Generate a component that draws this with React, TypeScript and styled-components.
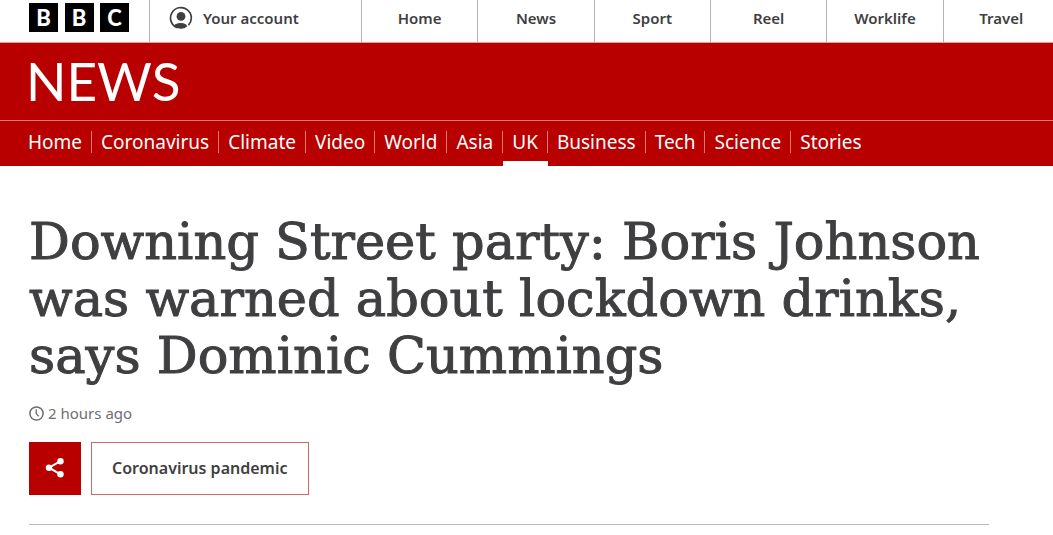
import React from "react";
import styled, { createGlobalStyle } from "styled-components";

const sans = `"Noto Sans", "Open Sans", sans-serif`;

const Global = createGlobalStyle`
  * { box-sizing: border-box; }
  body { margin: 0; background: #fff; color: #3f3f42; font-family: ${sans}; }
  a { color: inherit; text-decoration: none; }
`;

const TopBar = styled.header`
  display: flex;
  height: 43px;
  padding-left: 29px;
  overflow: hidden;
  border-bottom: 1px solid #d9a3a0;
`;

const Blocks = styled.a`
  display: flex;
  justify-content: space-between;
  flex: none;
  width: 100px;
  margin-right: 20px;
  padding-top: 3px;
`;

const Block = styled.span`
  width: 29px;
  height: 29px;
  background: #000;
  color: #fff;
  font: 900 22px/29px Lato, sans-serif;
  text-align: center;
`;

const TopLink = styled.a<{ $account?: boolean }>`
  display: flex;
  flex: ${(p) => (p.$account ? "0 0 212px" : "1 1 0")};
  align-items: center;
  justify-content: ${(p) => (p.$account ? "flex-start" : "center")};
  gap: 10px;
  padding: 0 0 6px ${(p) => (p.$account ? 19 : 0)}px;
  border-left: 1px solid #b5b5b5;
  font-size: 15px;
  font-weight: 600;
  line-height: 20px;
`;

const TopNav = styled.nav`
  display: flex;
  flex: 1 0 698px;
`;

const Masthead = styled.div`
  background: #b80000;
  color: #fff;
`;

const Brand = styled.a`
  display: block;
  height: 77px;
  padding: 6px 26px 0;
  font: 400 53px/64px Lato, sans-serif;
`;

const Sections = styled.nav`
  display: flex;
  height: 46px;
  padding-left: 19px;
  border-top: 1px solid #e2796f;
`;

const Section = styled.a<{ $active?: boolean }>`
  height: 45px;
  padding-top: 10px;
  border-bottom: ${(p) => (p.$active ? "5px solid #fff" : "0")};
  font-size: 19px;
  font-weight: 400;
  line-height: 22px;

  span {
    display: block;
    padding: 0 9px;
    border-right: 1px solid #e2796f;
  }
  &:last-child span { border-right: 0; }
`;

const Article = styled.main`
  margin: 0 64px 0 29px;
  padding: 47px 0 29px;
  border-bottom: 1px solid #b9b9bc;
`;

const Headline = styled.h1`
  margin: 0;
  font: 400 51px/57px "DejaVu Serif", serif;
  -webkit-text-stroke: 1px currentColor;
`;

const Time = styled.div`
  display: flex;
  align-items: center;
  gap: 4px;
  margin-top: 19px;
  color: #6e6e73;
  font-size: 15px;
  line-height: 20px;
`;

const Actions = styled.div`
  display: flex;
  gap: 10px;
  margin-top: 19px;
`;

const Share = styled.button`
  display: flex;
  align-items: center;
  justify-content: center;
  width: 52px;
  height: 53px;
  padding: 0 0 2px;
  border: 0;
  background: #b80000;
`;

const Topic = styled.a`
  height: 53px;
  padding: 0 20px;
  border: 1px solid #d0686c;
  font-size: 16px;
  font-weight: 600;
  line-height: 51px;
`;

const topLinks = ["Home", "News", "Sport", "Reel", "Worklife", "Travel"];
const sections = ["Home", "Coronavirus", "Climate", "Video", "World", "Asia", "UK", "Business", "Tech", "Science", "Stories"];

const AccountIcon = () => (
  <svg width="24" height="24" viewBox="0 0 24 24" aria-hidden="true">
    <path d="M8 21.6A10.4 10.4 0 1 1 19.4 19.2" fill="none" stroke="#3f3f42" strokeWidth="1.7" />
    <circle cx="12" cy="10.4" r="4.4" fill="#3f3f42" />
    <path d="M5.8 18.4Q12 15.8 16.8 18.2L18.4 20.2Q15.5 22.8 12 22.8Q8.4 22.8 5.8 20.6Z" fill="#3f3f42" />
  </svg>
);

const ClockIcon = () => (
  <svg width="15" height="15" viewBox="0 0 15 15" fill="none" stroke="#6e6e73" aria-hidden="true">
    <circle cx="7.5" cy="7.5" r="6.6" strokeWidth="1.5" />
    <path d="M7.2 3.3V7.6L9.7 10.2" strokeWidth="1.3" />
  </svg>
);

const ShareIcon = () => (
  <svg width="20" height="20" viewBox="0 0 20 20" fill="#fff" aria-hidden="true">
    <path d="M15.5 3.2L4 9.7L15.5 16.4" fill="none" stroke="#fff" strokeWidth="2" />
    <circle cx="15.5" cy="3.3" r="3.2" />
    <circle cx="4" cy="9.7" r="3.2" />
    <circle cx="15.5" cy="16.3" r="3.2" />
  </svg>
);

export default function App() {
  return (
    <>
      <Global />
      <TopBar>
        <Blocks href="#" aria-label="BBC">
          <Block>B</Block>
          <Block>B</Block>
          <Block>C</Block>
        </Blocks>
        <TopLink href="#" $account>
          <AccountIcon />
          Your account
        </TopLink>
        <TopNav>
          {topLinks.map((t) => (
            <TopLink key={t} href="#">{t}</TopLink>
          ))}
        </TopNav>
      </TopBar>
      <Masthead>
        <Brand href="#">NEWS</Brand>
        <Sections>
          {sections.map((t) => (
            <Section key={t} href="#" $active={t === "UK"}>
              <span>{t}</span>
            </Section>
          ))}
        </Sections>
      </Masthead>
      <Article>
        <Headline>Downing Street party: Boris Johnson was warned about lockdown drinks, says Dominic Cummings</Headline>
        <Time>
          <ClockIcon />
          <time>2 hours ago</time>
        </Time>
        <Actions>
          <Share type="button" aria-label="Share">
            <ShareIcon />
          </Share>
          <Topic href="#">Coronavirus pandemic</Topic>
        </Actions>
      </Article>
    </>
  );
}
